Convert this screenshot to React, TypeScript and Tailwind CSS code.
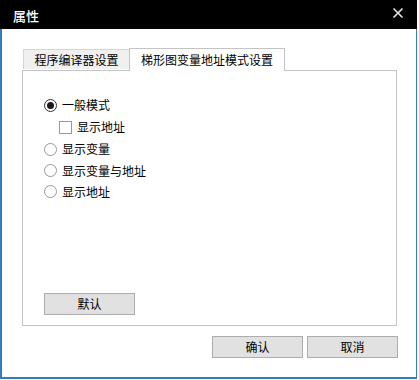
import React from "react";

const font = { fontFamily: '"Noto Sans CJK SC", "Microsoft YaHei", sans-serif' };

function Radio({ checked, label }: { checked?: boolean; label: string }) {
  return (
    <div className="flex items-center">
      <div
        className={`w-[13px] h-[13px] rounded-full border flex items-center justify-center bg-white ${
          checked ? "border-[#333333]" : "border-[#999999]"
        }`}
      >
        {checked && <div className="w-[7px] h-[7px] rounded-full bg-[#1a1a1a]" />}
      </div>
      <span className="ml-[5px] text-[12px] leading-none text-black">{label}</span>
    </div>
  );
}

function Btn({ label, w }: { label: string; w: string }) {
  return (
    <div
      className={`${w} h-[22px] border border-[#adadad] bg-[#e1e1e1] flex items-center justify-center text-[12px] leading-none text-black`}
    >
      {label}
    </div>
  );
}

export default function App() {
  return (
    <div className="w-[419px] h-[380px] bg-white" style={font}>
      <div className="w-[417px] h-[379px] flex flex-col">
        {/* Title bar */}
        <div className="h-[29px] bg-black flex items-center justify-between pl-[13px] pr-[13px] shrink-0">
          <span className="text-white text-[13px] leading-none font-medium mt-[1px]">属性</span>
          <svg width="12" height="12" viewBox="0 0 12 12" className="mb-[3px]">
            <path d="M1.5 1.5 L10.5 10.5 M10.5 1.5 L1.5 10.5" stroke="#e6e6e6" strokeWidth="1.6" />
          </svg>
        </div>
        {/* Body */}
        <div className="flex-1 border-l-2 border-r border-b-2 border-[#2f7dc0] bg-white flex flex-col pl-[20px] pt-[18px]">
          {/* Tabs */}
          <div className="flex items-end h-[23px] relative z-10">
            <div className="ml-[1px] w-[106px] h-[20px] border-t border-l border-[#d6d6d6] bg-[#f0f0f0] flex items-center justify-center text-[12px] leading-none text-black pt-[1px] mb-[1px]">
              程序编译器设置
            </div>
            <div className="w-[156px] h-[23px] border-t border-l border-r border-[#c4c4c4] bg-white flex items-center justify-center text-[12px] leading-none text-black -mb-[1px]">
              梯形图变量地址模式设置
            </div>
          </div>
          {/* Panel */}
          <div className="w-[375px] h-[256px] border border-[#c4c4c4] flex flex-col pl-[21px] pt-[23px] pb-[10px]">
            <div className="flex flex-col">
              <div className="h-[22px] flex items-center">
                <Radio checked label="一般模式" />
              </div>
              <div className="h-[22px] flex items-center pl-[15px]">
                <div className="w-[13px] h-[13px] border border-[#999999] bg-white" />
                <span className="ml-[5px] text-[12px] leading-none text-black">显示地址</span>
              </div>
              <div className="h-[22px] flex items-center">
                <Radio label="显示变量" />
              </div>
              <div className="h-[21px] flex items-center">
                <Radio label="显示变量与地址" />
              </div>
              <div className="h-[21px] flex items-center">
                <Radio label="显示地址" />
              </div>
            </div>
            <div className="mt-auto">
              <Btn label="默认" w="w-[91px]" />
            </div>
          </div>
          {/* Bottom buttons */}
          <div className="flex justify-end gap-[4px] mt-[10px] pr-[18px]">
            <Btn label="确认" w="w-[91px]" />
            <Btn label="取消" w="w-[91px]" />
          </div>
        </div>
      </div>
    </div>
  );
}
